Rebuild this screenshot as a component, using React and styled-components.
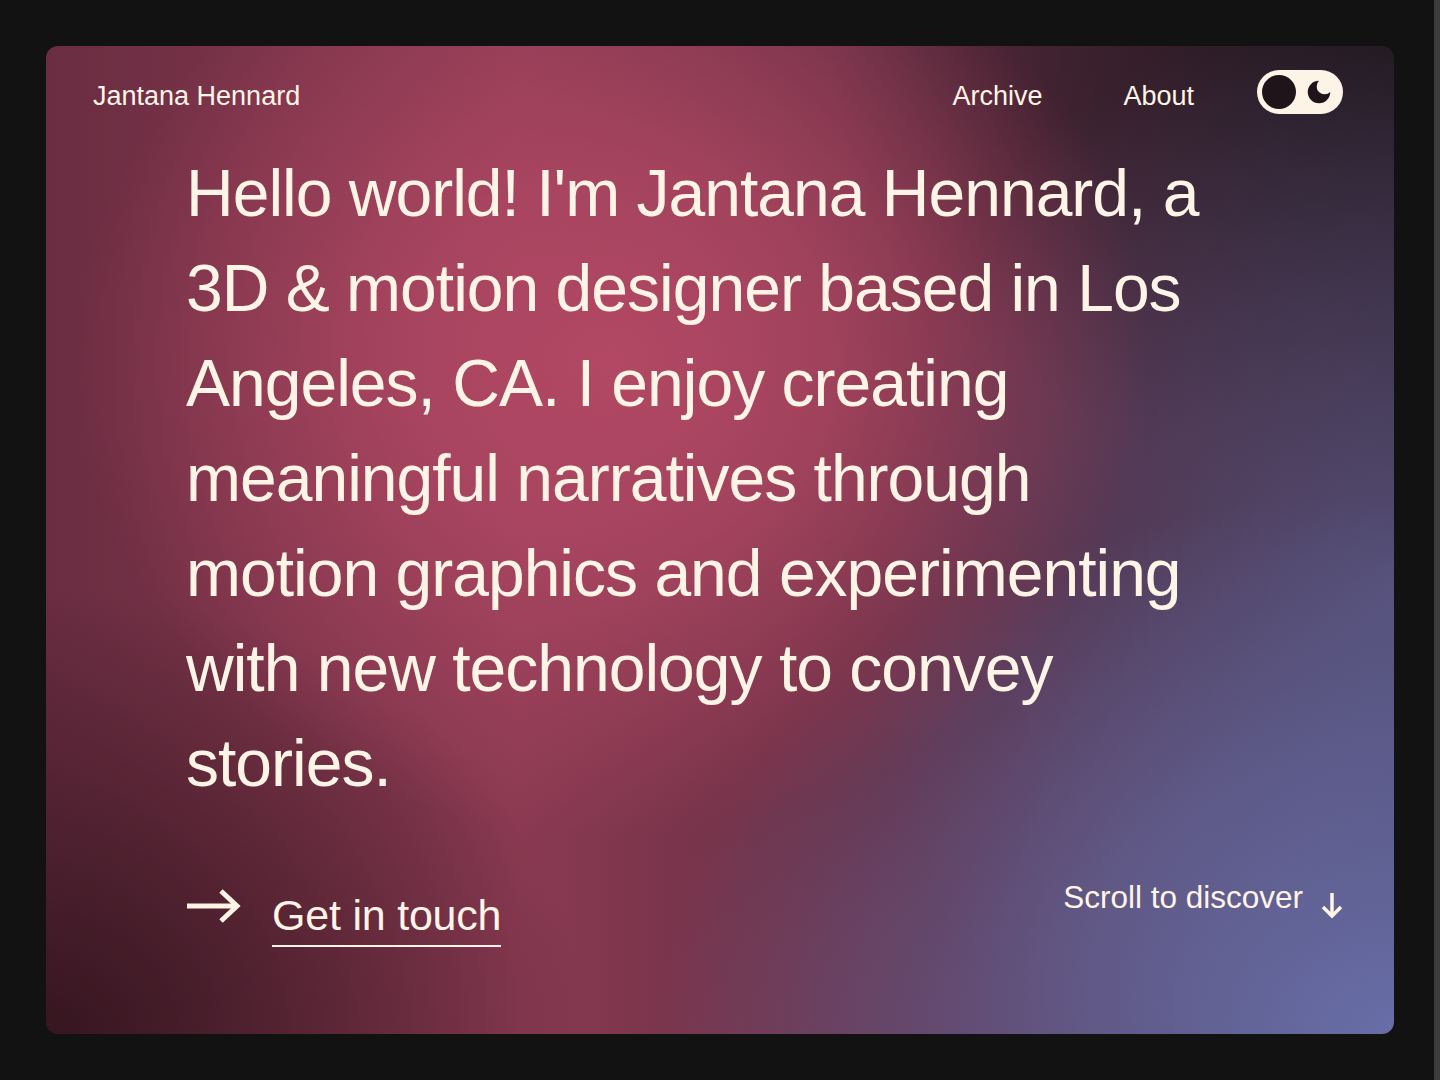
import React from "react";
import styled, { createGlobalStyle } from "styled-components";

const GlobalStyle = createGlobalStyle`
  body {
    margin: 0;
    background: #121212;
    font-family: "Liberation Sans", Arial, sans-serif;
  }
  * {
    box-sizing: border-box;
  }
`;

const Page = styled.div`
  min-height: 100vh;
  padding: 46px;
`;

// stand-in for the browser's scrollbar track on the right edge
const ScrollTrack = styled.div`
  position: fixed;
  top: 0;
  right: 0;
  width: 6px;
  height: 100vh;
  background: #3c3c3c;
`;

const Card = styled.section`
  height: calc(100vh - 92px);
  border-radius: 12px;
  padding: 24px 51px 0 47px;
  color: #fff4e6;
  background-color: #4a2535;
  background-image:
    radial-gradient(ellipse 40% 48% at 42% 32%, rgba(178, 72, 100, 1) 0%, rgba(178, 72, 100, 0.75) 40%, rgba(178, 72, 100, 0) 100%),
    radial-gradient(ellipse 55% 55% at 100% 100%, rgba(104, 110, 168, 1) 0%, rgba(104, 110, 168, 0.6) 50%, rgba(104, 110, 168, 0) 100%),
    radial-gradient(ellipse 40% 60% at 100% 55%, rgba(88, 84, 128, 0.8) 0%, rgba(88, 84, 128, 0) 100%),
    radial-gradient(ellipse 42% 45% at 100% 0%, rgba(32, 22, 28, 1) 0%, rgba(32, 22, 28, 0) 100%),
    radial-gradient(ellipse 40% 45% at 0% 100%, rgba(54, 22, 32, 1) 0%, rgba(54, 22, 32, 0) 100%),
    linear-gradient(90deg, #6a2d41 0%, #8a3a52 35%, #5a2a3e 70%, #3a2838 100%);
`;

const Header = styled.header`
  display: flex;
  align-items: center;
  height: 44px;
`;

const Brand = styled.div`
  font-size: 27px;
  padding-top: 8px;
  flex: 1;
`;

const Nav = styled.nav`
  display: flex;
  align-items: center;
  gap: 81px;
  margin-right: 63px;
`;

const NavLink = styled.a`
  font-size: 27px;
  padding-top: 8px;
  color: inherit;
  text-decoration: none;
`;

const Toggle = styled.button`
  width: 86px;
  height: 44px;
  border: none;
  border-radius: 22px;
  background: #fdf3e6;
  display: flex;
  align-items: center;
  justify-content: space-between;
  padding: 0 9px 0 5px;
  cursor: pointer;
`;

const Knob = styled.span`
  width: 34px;
  height: 34px;
  border-radius: 50%;
  background: #1e141a;
`;

const Main = styled.main`
  padding-left: 93px;
`;

const Intro = styled.h1`
  margin: 32px 0 0;
  max-width: 1040px;
  font-weight: 400;
  font-size: 66px;
  line-height: 95px;
  letter-spacing: -0.015em;
`;

const BottomRow = styled.div`
  display: flex;
  justify-content: space-between;
  align-items: flex-start;
  margin-top: 68px;
`;

const Cta = styled.div`
  display: flex;
  align-items: flex-start;
  gap: 31px;
  padding-top: 12px;
  padding-left: 1px;

  svg {
    margin-top: -2px;
  }
`;

const CtaLink = styled.a`
  font-size: 43px;
  line-height: 48px;
  letter-spacing: -0.005em;
  color: inherit;
  text-decoration: none;
  padding-bottom: 6px;
  border-bottom: 2px solid #fff4e6;
`;

const Scroll = styled.div`
  display: flex;
  align-items: flex-start;
  gap: 18px;
  font-size: 31.5px;

  svg {
    margin-top: 14px;
  }
`;

const ArrowRight = () => (
  <svg width="54" height="34" viewBox="0 0 54 34" fill="none">
    <path d="M0 17H50" stroke="#fff4e6" strokeWidth="5" />
    <path d="M34 2L50 17L34 32" stroke="#fff4e6" strokeWidth="5" />
  </svg>
);

const ArrowDown = () => (
  <svg width="22" height="26" viewBox="0 0 22 26" fill="none">
    <path d="M11 0V23" stroke="#fff4e6" strokeWidth="3.5" />
    <path d="M2 14L11 23L20 14" stroke="#fff4e6" strokeWidth="3.5" />
  </svg>
);

const Moon = () => (
  <svg width="30" height="30" viewBox="0 0 24 24">
    <path d="M12 3a6 6 0 0 0 9 9 9 9 0 1 1-9-9Z" fill="#1e141a" />
  </svg>
);

export default function App() {
  return (
    <Page>
      <GlobalStyle />
      <Card>
        <Header>
          <Brand>Jantana Hennard</Brand>
          <Nav>
            <NavLink href="#">Archive</NavLink>
            <NavLink href="#">About</NavLink>
          </Nav>
          <Toggle aria-label="Toggle dark mode">
            <Knob />
            <Moon />
          </Toggle>
        </Header>
        <Main>
          <Intro>
            Hello world! I'm Jantana Hennard, a 3D &amp; motion designer based
            in Los Angeles, CA. I enjoy creating meaningful narratives through
            motion graphics and experimenting with new technology to convey
            stories.
          </Intro>
          <BottomRow>
            <Cta>
              <ArrowRight />
              <CtaLink href="#">Get in touch</CtaLink>
            </Cta>
            <Scroll>
              <span>Scroll to discover</span>
              <ArrowDown />
            </Scroll>
          </BottomRow>
        </Main>
      </Card>
      <ScrollTrack />
    </Page>
  );
}
